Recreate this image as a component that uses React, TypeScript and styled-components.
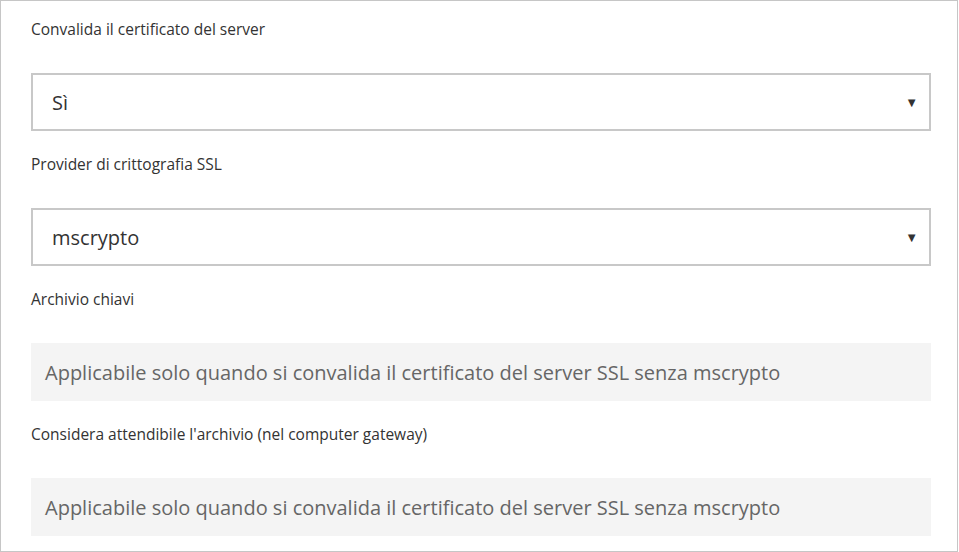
import * as React from "react";
import styled, { createGlobalStyle } from "styled-components";

const GlobalStyle = createGlobalStyle`
  html, body {
    margin: 0;
    padding: 0;
    background: #ffffff;
  }

  body {
    font-family: "Open Sans", "Noto Sans", sans-serif;
    color: #333333;
  }
`;

type Field = {
  label: string;
  kind: "select" | "disabled";
  value: string;
};

const FIELDS: Field[] = [
  { label: "Convalida il certificato del server", kind: "select", value: "Sì" },
  { label: "Provider di crittografia SSL", kind: "select", value: "mscrypto" },
  {
    label: "Archivio chiavi",
    kind: "disabled",
    value: "Applicabile solo quando si convalida il certificato del server SSL senza mscrypto",
  },
  {
    label: "Considera attendibile l'archivio (nel computer gateway)",
    kind: "disabled",
    value: "Applicabile solo quando si convalida il certificato del server SSL senza mscrypto",
  },
];

const App = () => {
  return (
    <>
      <GlobalStyle />
      <Frame>
        {FIELDS.map((field) => (
          <FieldRow key={field.label}>
            <Label>{field.label}</Label>
            {field.kind === "select" ? (
              <SelectBox>
                <SelectValue>{field.value}</SelectValue>
                <Caret>▼</Caret>
              </SelectBox>
            ) : (
              <DisabledBox>{field.value}</DisabledBox>
            )}
          </FieldRow>
        ))}
      </Frame>
    </>
  );
};

const Frame = styled.div`
  box-sizing: border-box;
  width: 958px;
  height: 552px;
  border: 1px solid #c6c6c6;
  padding: 18px 26px 0 30px;
  display: flex;
  flex-direction: column;
  gap: 23px;
  overflow: hidden;
`;

const FieldRow = styled.div`
  display: flex;
  flex-direction: column;
  gap: 34px;
`;

const Label = styled.div`
  font-size: 15.5px;
  line-height: 20px;
  color: #333333;
  white-space: nowrap;
`;

const SelectBox = styled.div`
  box-sizing: border-box;
  height: 58px;
  border: 2px solid #c8c8c8;
  background: #ffffff;
  display: flex;
  align-items: center;
  justify-content: space-between;
  padding: 0 11px 0 19px;
`;

const SelectValue = styled.span`
  font-size: 20px;
  color: #333333;
`;

const Caret = styled.span`
  font-size: 13px;
  color: #333333;
`;

const DisabledBox = styled.div`
  box-sizing: border-box;
  height: 58px;
  background: #f4f4f4;
  display: flex;
  align-items: center;
  padding: 0 14px;
  font-size: 20px;
  color: #666666;
  white-space: nowrap;
`;

export default App;
